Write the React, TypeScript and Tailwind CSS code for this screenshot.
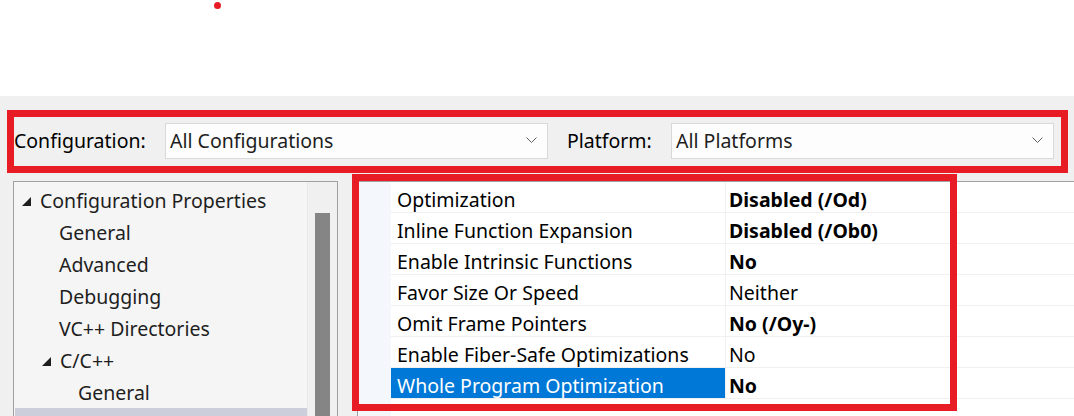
import { ReactNode } from "react";

type Row = {
  name: string;
  value: string;
  bold: boolean;
  selected?: boolean;
};

const rows: Row[] = [
  { name: "Optimization", value: "Disabled (/Od)", bold: true },
  { name: "Inline Function Expansion", value: "Disabled (/Ob0)", bold: true },
  { name: "Enable Intrinsic Functions", value: "No", bold: true },
  { name: "Favor Size Or Speed", value: "Neither", bold: false },
  { name: "Omit Frame Pointers", value: "No (/Oy-)", bold: true },
  { name: "Enable Fiber-Safe Optimizations", value: "No", bold: false },
  { name: "Whole Program Optimization", value: "No", bold: true, selected: true },
];

const Chevron = () => (
  <svg width="11" height="7" viewBox="0 0 11 7" className="shrink-0">
    <polyline points="0.5,0.5 5.5,5.5 10.5,0.5" fill="none" stroke="#606060" strokeWidth="1" />
  </svg>
);

const Expander = () => (
  <svg width="9" height="9" viewBox="0 0 9 9" className="shrink-0">
    <polygon points="9,0 9,9 0,9" fill="#1e1e1e" />
  </svg>
);

const Combo = ({ text }: { text: string }) => (
  <div className="flex h-[36px] w-[383px] shrink-0 items-center justify-between border border-[#d9d9d9] bg-[#fdfdfd] pl-[4px] pr-[10px]">
    <span>{text}</span>
    <Chevron />
  </div>
);

const TreeItem = ({ indent, children, open }: { indent: number; children: ReactNode; open?: boolean }) => (
  <div className="flex h-[32px] items-center pt-[2px]" style={{ paddingLeft: indent }}>
    {open && (
      <span className="mr-[9px] flex">
        <Expander />
      </span>
    )}
    <span>{children}</span>
  </div>
);

export default function App() {
  return (
    <div className="relative flex h-[416px] w-[1074px] flex-col overflow-hidden bg-white font-['Noto_Sans',sans-serif] text-[19.5px] leading-none text-[#1e1e1e]">
      {/* top blank area with the marker dot */}
      <div className="h-[96px] shrink-0 bg-white">
        <div className="ml-[214px] mt-[2px] h-[7px] w-[7px] rounded-full bg-[#e81c24]" />
      </div>

      <div className="flex flex-1 flex-col bg-[#f0f0f0]">
        {/* configuration bar */}
        <div className="ml-[7px] mt-[14px] flex h-[63px] w-[1061px] shrink-0 items-center border-[7px] border-[#e81c24] pb-[2px]">
          <span className="w-[151px] shrink-0 text-black">Configuration:</span>
          <Combo text="All Configurations" />
          <span className="w-[123px] shrink-0 pl-[19px] text-black">Platform:</span>
          <Combo text="All Platforms" />
        </div>

        <div className="flex flex-1 pt-[8px]">
          {/* tree */}
          <div className="ml-[13px] flex w-[325px] shrink-0 border border-b-0 border-[#a0a0a0] bg-[#f5f5f5]">
            <div className="flex flex-1 flex-col border-r border-[#e8e8e8] pt-[2px]">
              <TreeItem indent={8} open>
                Configuration Properties
              </TreeItem>
              <TreeItem indent={45}>General</TreeItem>
              <TreeItem indent={45}>Advanced</TreeItem>
              <TreeItem indent={45}>Debugging</TreeItem>
              <TreeItem indent={45}>VC++ Directories</TreeItem>
              <TreeItem indent={28} open>
                C/C++
              </TreeItem>
              <TreeItem indent={64}>General</TreeItem>
              <div className="ml-[1px] h-[32px] bg-[#cccedb]" />
            </div>
            <div className="flex w-[29px] shrink-0 justify-center bg-[#f0f0f0] pt-[31px]">
              <div className="w-[15px] bg-[#858585]" />
            </div>
          </div>

          {/* property grid */}
          <div className="ml-[19px] flex flex-1 border-l border-t border-[#a0a0a0] bg-white">
            <div className="w-[33px] shrink-0 bg-[#f4f7fb]" />
            <div className="flex flex-1 flex-col">
              {rows.map((r) => (
                <div key={r.name} className="flex h-[31px] shrink-0 border-b border-[#f0f0f0]">
                  <div
                    className={
                      r.selected
                        ? "flex w-[334px] shrink-0 items-center bg-[#0078d7] pl-[6px] pt-[6px] text-white"
                        : "flex w-[334px] shrink-0 items-center pl-[6px] pt-[6px] text-black"
                    }
                  >
                    {r.name}
                  </div>
                  <div
                    className={
                      r.bold
                        ? "flex flex-1 items-center border-l border-[#f0f0f0] pl-[3px] pt-[6px] font-bold text-black"
                        : "flex flex-1 items-center border-l border-[#f0f0f0] pl-[3px] pt-[6px] text-black"
                    }
                  >
                    {r.value}
                  </div>
                </div>
              ))}
            </div>
          </div>
        </div>
      </div>

      {/* annotation frame over the property grid */}
      <div className="absolute left-[352px] top-[174px] h-[237px] w-[605px] border-[7px] border-[#e81c24]" />
    </div>
  );
}
